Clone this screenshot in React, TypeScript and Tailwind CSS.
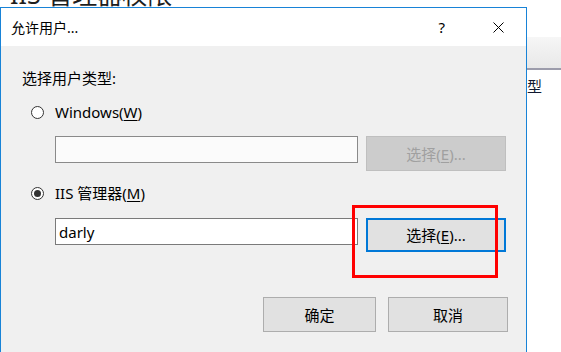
import React from "react";

const FONT = "font-['Noto_Sans','Noto_Sans_CJK_SC',sans-serif]";

function Radio({ checked }: { checked?: boolean }) {
  return (
    <span className="flex h-[13px] w-[13px] items-center justify-center rounded-full border border-[#333333] bg-white">
      {checked && <span className="h-[7px] w-[7px] rounded-full bg-[#333333]" />}
    </span>
  );
}

function Btn({
  children,
  className,
}: {
  children: React.ReactNode;
  className: string;
}) {
  return (
    <div className={`flex items-center justify-center text-[15px] ${className}`}>
      {children}
    </div>
  );
}

export default function App() {
  return (
    <div className={`relative h-[352px] w-[561px] overflow-hidden bg-white ${FONT}`}>
      {/* page behind the dialog */}
      <div className="h-[7px] overflow-hidden">
        <div className="-mt-[21px] pl-[10px] text-[25px] leading-[30px] text-[#1e1e1e]">
          IIS 管理器权限
        </div>
      </div>
      <div className="mt-[30px] h-[33px] border-b-2 border-[#9c9cab] bg-gradient-to-b from-[#f6f6f6] to-[#e8e8e8]" />
      <div className="mt-[6px] pl-[512px] text-[15px] leading-[20px] text-[#101830]">类型</div>

      {/* dialog */}
      <div className="absolute left-0 top-[7px] flex h-[360px] w-[527px] flex-col border border-[#1883d7] bg-[#f0f0f0]">
        <div className="flex h-[38px] items-center bg-white pl-[10px] pr-[22px] text-[14px] text-black">
          <span>允许用户...</span>
          <span className="ml-auto mr-[48px] text-[15px]">?</span>
          <svg width="11" height="11" viewBox="0 0 11 11" className="mt-[1px]">
            <path d="M0.5 0.5 L10.5 10.5 M10.5 0.5 L0.5 10.5" stroke="#000" strokeWidth="1" />
          </svg>
        </div>

        <div className="flex flex-col pl-[21px] pt-[22px] text-[15px] leading-[20px] text-black">
          <div>选择用户类型:</div>

          <div className="mt-[14px] flex items-center gap-[11px] pl-[9px]">
            <Radio />
            <span>
              Windows(<span className="underline underline-offset-2">W</span>)
            </span>
          </div>

          <div className="mt-[14px] flex items-start gap-[8px] pl-[33px]">
            <div className="h-[27px] w-[303px] border border-[#8a8a8a] bg-[#fbfbfb]" />
            <Btn className="h-[35px] w-[140px] border border-[#bfbfbf] bg-[#cccccc] text-[#a0a0a0]">
              选择(<span className="underline underline-offset-2">E</span>)...
            </Btn>
          </div>

          <div className="mt-[12px] flex items-center gap-[11px] pl-[9px]">
            <Radio checked />
            <span>
              IIS 管理器(<span className="underline underline-offset-2">M</span>)
            </span>
          </div>

          <div className="mt-[15px] flex items-start gap-[8px] pl-[33px]">
            <div className="flex h-[27px] w-[303px] items-center border border-[#7a7a7a] bg-white pl-[3px]">
              darly
            </div>
            <Btn className="h-[34px] w-[140px] border-2 border-[#0078d7] bg-[#e1e1e1]">
              选择(<span className="underline underline-offset-2">E</span>)...
            </Btn>
          </div>

          <div className="mt-[45px] flex gap-[12px] pl-[241px]">
            <Btn className="h-[35px] w-[113px] border border-[#adadad] bg-[#e1e1e1]">确定</Btn>
            <Btn className="h-[35px] w-[120px] border border-[#adadad] bg-[#e1e1e1]">取消</Btn>
          </div>
        </div>
      </div>

      {/* red annotation box */}
      <div className="absolute left-[352px] top-[205px] h-[73px] w-[146px] border-[3px] border-[#ff0000]" />
    </div>
  );
}
